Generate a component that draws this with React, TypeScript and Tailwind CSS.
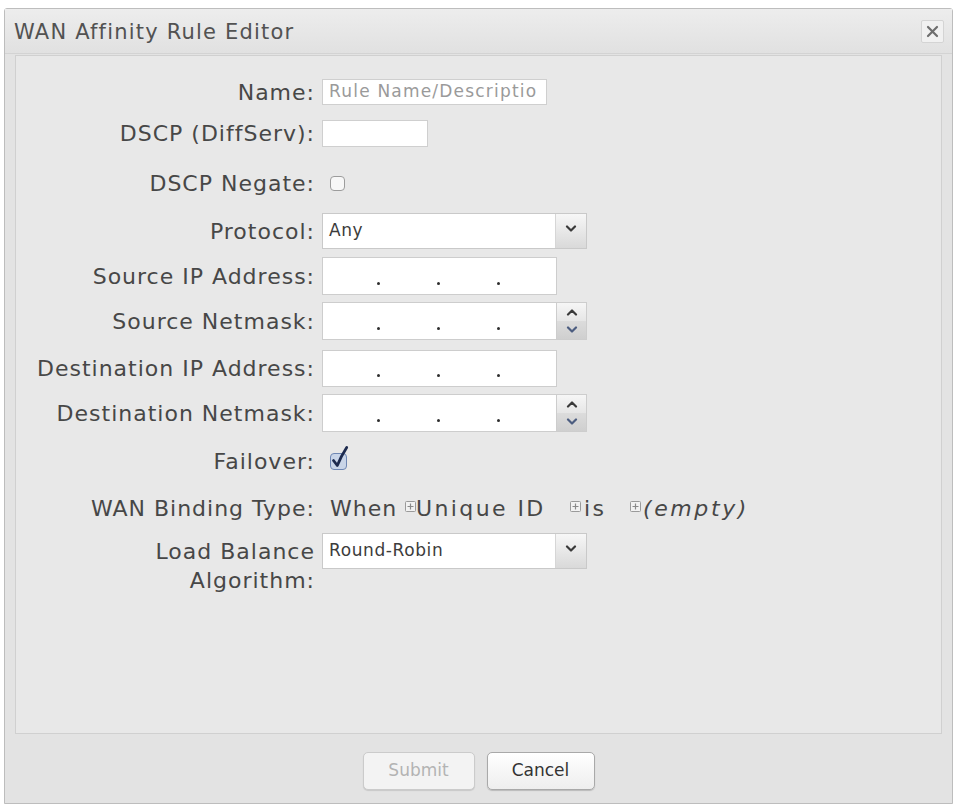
import React from 'react';

const font = { fontFamily: '"DejaVu Sans", Verdana, sans-serif' };

const Label: React.FC<{ children: React.ReactNode }> = ({ children }) => (
  <div className="w-[300px] shrink-0 text-right text-[22px] tracking-[1px] text-[#474747] pr-[1px]">{children}</div>
);

const PlusBox = () => (
  <svg width="11" height="11" viewBox="0 0 11 11" className="inline-block shrink-0 mb-[3px]">
    <rect x="0.5" y="0.5" width="10" height="10" rx="1" fill="#f2f2f2" stroke="#9a9a9a" />
    <path d="M5.5 2.5v6M2.5 5.5h6" stroke="#8a8a8a" strokeWidth="1.2" />
  </svg>
);

const Chevron = ({ up = false, color = '#3a3a3a' }: { up?: boolean; color?: string }) => (
  <svg width="12" height="8" viewBox="0 0 12 8">
    <path d={up ? 'M2 6.5L6 2.5l4 4' : 'M2 1.5l4 4 4-4'} fill="none" stroke={color} strokeWidth="2.2" strokeLinecap="round" strokeLinejoin="round" />
  </svg>
);

const IpField: React.FC<{ spinner?: boolean }> = ({ spinner }) => (
  <div className="flex h-full">
    <div className="w-[235px] h-full bg-white border border-[#cdcdcd] flex items-end pb-[9px]">
      <div className="w-[54px]" />
      <span className="w-[3px] h-[3px] rounded-full bg-[#2e2e2e]" />
      <div className="w-[57px]" />
      <span className="w-[3px] h-[3px] rounded-full bg-[#2e2e2e]" />
      <div className="w-[57px]" />
      <span className="w-[3px] h-[3px] rounded-full bg-[#2e2e2e]" />
    </div>
    {spinner && (
      <div className="w-[30px] h-full border border-l-0 border-[#cdcdcd] flex flex-col">
        <div className="flex-1 bg-gradient-to-b from-[#f6f6f6] to-[#e6e6e6] flex items-center justify-center">
          <Chevron up />
        </div>
        <div className="flex-1 bg-gradient-to-b from-[#dcdcdc] to-[#cfcfcf] flex items-center justify-center">
          <Chevron color="#4c5d80" />
        </div>
      </div>
    )}
  </div>
);

const Select: React.FC<{ value: string }> = ({ value }) => (
  <div className="w-[265px] h-[36px] flex border border-[#c9c9c9] bg-white">
    <div className="flex-1 flex items-center pl-[6px] text-[17px] tracking-[0.6px] text-[#3c3c3c]">{value}</div>
    <div className="w-[31px] border-l border-[#d6d6d6] bg-gradient-to-b from-[#f7f7f7] to-[#d9d9d9] flex justify-center pt-[11px]">
      <Chevron />
    </div>
  </div>
);

const Checkbox: React.FC<{ checked?: boolean }> = ({ checked }) =>
  checked ? (
    <svg width="22" height="26" viewBox="0 0 22 26" className="ml-[7px] mb-[6px]">
      <rect x="1.5" y="8.5" width="16" height="16" rx="3.5" fill="#c9d5e8" stroke="#6f87b3" />
      <path d="M4.5 15.5l3.8 5c2.6-6.5 5.8-12.5 9.4-18" fill="none" stroke="#1d2a4e" strokeWidth="2.8" strokeLinecap="round" strokeLinejoin="round" />
    </svg>
  ) : (
    <div className="ml-[8px] w-[15px] h-[15px] rounded-[4px] border border-[#9c9c9c] bg-[#f7f7f7]" />
  );

export default function App() {
  return (
    <div className="w-[956px] h-[806px] bg-white pt-[8px] pl-[4px]" style={font}>
      <div className="w-[949px] h-[796px] border border-[#bdbdbd] rounded-t-[3px] bg-[#e3e3e3] flex flex-col">
        <div className="h-[45px] shrink-0 flex items-center justify-between pl-[9px] pr-[8px] border-b border-[#d3d3d3] bg-gradient-to-b from-[#ededed] to-[#e1e1e1]">
          <span className="text-[21px] tracking-[1.2px] text-[#525252] pt-[4px]">WAN Affinity Rule Editor</span>
          <div className="w-[23px] h-[23px] border border-[#d4d4d4] bg-[#f1f1f1] rounded-[2px] flex items-center justify-center">
            <svg width="13" height="13" viewBox="0 0 13 13">
              <path d="M2 2l9 9M11 2l-9 9" stroke="#6e6e6e" strokeWidth="2.2" strokeLinecap="round" />
            </svg>
          </div>
        </div>

        <div className="mx-[10px] mt-[1px] h-[679px] shrink-0 border border-[#d0d0d0] bg-[#e8e8e8] flex flex-col">
          <div className="flex items-center gap-[6px] mt-[23px] h-[26px]">
            <Label>Name:</Label>
            <div className="w-[225px] h-full bg-white border border-[#cfcfcf] flex items-center pl-[6px] text-[17px] tracking-[1.2px] text-[#9a9a9a] overflow-hidden whitespace-nowrap">
              Rule Name/Descriptio
            </div>
          </div>

          <div className="flex items-center gap-[6px] mt-[15px] h-[27px]">
            <Label>DSCP (DiffServ):</Label>
            <div className="w-[106px] h-full bg-white border border-[#cfcfcf]" />
          </div>

          <div className="flex items-center gap-[6px] mt-[24px] h-[24px]">
            <Label>DSCP Negate:</Label>
            <Checkbox />
          </div>

          <div className="flex items-center gap-[6px] mt-[18px] h-[36px]">
            <Label>Protocol:</Label>
            <Select value="Any" />
          </div>

          <div className="flex items-center gap-[6px] mt-[8px] h-[38px]">
            <Label>Source IP Address:</Label>
            <IpField />
          </div>

          <div className="flex items-center gap-[6px] mt-[7px] h-[38px]">
            <Label>Source Netmask:</Label>
            <IpField spinner />
          </div>

          <div className="flex items-center gap-[6px] mt-[10px] h-[37px]">
            <Label>Destination IP Address:</Label>
            <IpField />
          </div>

          <div className="flex items-center gap-[6px] mt-[7px] h-[38px]">
            <Label>Destination Netmask:</Label>
            <IpField spinner />
          </div>

          <div className="flex items-center gap-[6px] mt-[17px] h-[24px]">
            <Label>Failover:</Label>
            <Checkbox checked />
          </div>

          <div className="flex items-center gap-[6px] mt-[23px] h-[24px]">
            <Label>WAN Binding Type:</Label>
            <div className="pl-[8px] text-[22px] tracking-[1px] text-[#474747] whitespace-nowrap flex items-center">
              <span className="w-[75px]">When</span>
              <PlusBox />
              <span className="w-[154px] tracking-[2.4px]">Unique ID</span>
              <PlusBox />
              <span className="ml-[3px] w-[46px] tracking-[2.4px]">is</span>
              <PlusBox />
              <span className="ml-[2px] italic tracking-[2.6px]">(empty)</span>
            </div>
          </div>

          <div className="flex items-start gap-[6px] mt-[13px]">
            <div className="pt-[4px] leading-[29px]">
              <Label>
                Load Balance
                <br />
                Algorithm:
              </Label>
            </div>
            <Select value="Round-Robin" />
          </div>
        </div>

        <div className="flex justify-center gap-[12px] pt-[18px]">
          <button className="w-[112px] h-[38px] rounded-[5px] border border-[#cbcbcb] bg-[#f3f3f3] text-[17px] text-[#b3b3b3] shadow-[0_1px_1px_rgba(0,0,0,0.12)]">
            Submit
          </button>
          <button className="w-[108px] h-[38px] rounded-[5px] border border-[#a9a9a9] bg-gradient-to-b from-[#ffffff] to-[#eeeeee] text-[17px] text-[#333333] shadow-[0_1px_1px_rgba(0,0,0,0.18)]">
            Cancel
          </button>
        </div>
      </div>
    </div>
  );
}
